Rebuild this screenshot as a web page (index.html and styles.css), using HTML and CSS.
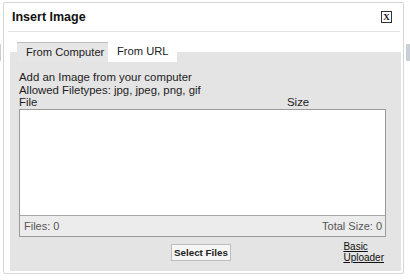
FILE: index.html
```html
<!DOCTYPE html>
<html>
<head>
<meta charset="utf-8">
<link rel="stylesheet" href="styles.css">
</head>
<body>
<div class="backdrop"></div>
<div class="dialog">
  <div class="header">
    <span class="title">Insert Image</span>
    <span class="close">X</span>
  </div>
  <div class="panel">
    <div class="tabs">
      <div class="tab active">From Computer</div>
      <div class="tab">From URL</div>
    </div>
    <div class="content">
      <div class="info">Add an Image from your computer</div>
      <div class="info">Allowed Filetypes: jpg, jpeg, png, gif</div>
      <div class="cols"><span class="col-file">File</span><span class="col-size">Size</span></div>
      <div class="filebox">
        <div class="list"></div>
        <div class="foot"><span>Files: 0</span><span>Total Size: 0</span></div>
      </div>
      <div class="actions">
        <button class="select">Select Files</button>
        <a class="basic" href="#">Basic<br>Uploader</a>
      </div>
    </div>
  </div>
</div>
</body>
</html>
```
FILE: styles.css
```css
html, body {
  margin: 0;
  padding: 0;
  background: #fff;
  font-family: "Liberation Sans", Arial, sans-serif;
  color: #222;
}
.backdrop {
  height: 17px;
  margin-top: 44px;
  background: #c8cfd7;
}
.dialog {
  position: absolute;
  left: 3px;
  top: 2px;
  width: 399px;
  height: 270px;
  border: 1px solid #d6d6d6;
  border-radius: 2px;
  background: #fff;
  box-shadow: 0 0 0 2px #fff;
  display: flex;
  flex-direction: column;
}
.header {
  height: 28px;
  margin: 0 3px 0 4px;
  border-bottom: 1px solid #e2e2e2;
  display: flex;
  align-items: center;
  justify-content: space-between;
  padding: 0 8px 0 4px;
}
.title {
  font-size: 12.5px;
  font-weight: bold;
  color: #111;
}
.close {
  width: 9px;
  height: 10px;
  border: 1px solid #333;
  font-family: "Liberation Serif", serif;
  font-size: 9px;
  font-weight: bold;
  line-height: 10px;
  text-align: center;
  color: #111;
}
.panel {
  margin: 10px 2px 2px 6px;
  flex: 1;
  background: linear-gradient(#fff 10px, #e4e4e4 10px);
  display: flex;
  flex-direction: column;
}
.tabs {
  display: flex;
  padding-left: 7px;
  height: 20px;
}
.tab {
  font-size: 11.2px;
  line-height: 19px;
  padding: 0 8px 0 9px;
  background: #fff;
  white-space: nowrap;
}
.tab.active {
  background: #e6e6e6;
  border-top: 1px solid #bdbdbd;
  line-height: 18px;
  box-sizing: border-box;
  width: 91px;
  padding: 0 0 0 9px;
}
.content {
  padding: 9px 15px 0 9px;
  font-size: 11.4px;
}
.info {
  line-height: 12.5px;
}
.cols {
  display: flex;
  line-height: 13px;
}
.col-file {
  width: 268px;
}
.filebox {
  border: 1px solid #9a9a9a;
  background: #fff;
}
.list {
  height: 105px;
  border-bottom: 1px solid #a8a8a8;
}
.foot {
  height: 20px;
  background: #ececec;
  display: flex;
  justify-content: space-between;
  align-items: center;
  padding: 0 3px 0 4px;
  color: #555;
  font-size: 11px;
}
.actions {
  display: flex;
  align-items: flex-start;
  margin-top: 4px;
}
.select {
  margin-left: 152px;
  margin-top: 3px;
  height: 17px;
  padding: 0 2px;
  border: 1px solid #bdbdbd;
  background: #f6f6f6;
  font-family: "Liberation Sans", Arial, sans-serif;
  font-size: 9.8px;
  font-weight: bold;
  color: #222;
  border-radius: 0;
}
.basic {
  margin-left: auto;
  margin-right: 2px;
  font-size: 10px;
  line-height: 11px;
  color: #111;
  text-decoration: underline;
}
```
